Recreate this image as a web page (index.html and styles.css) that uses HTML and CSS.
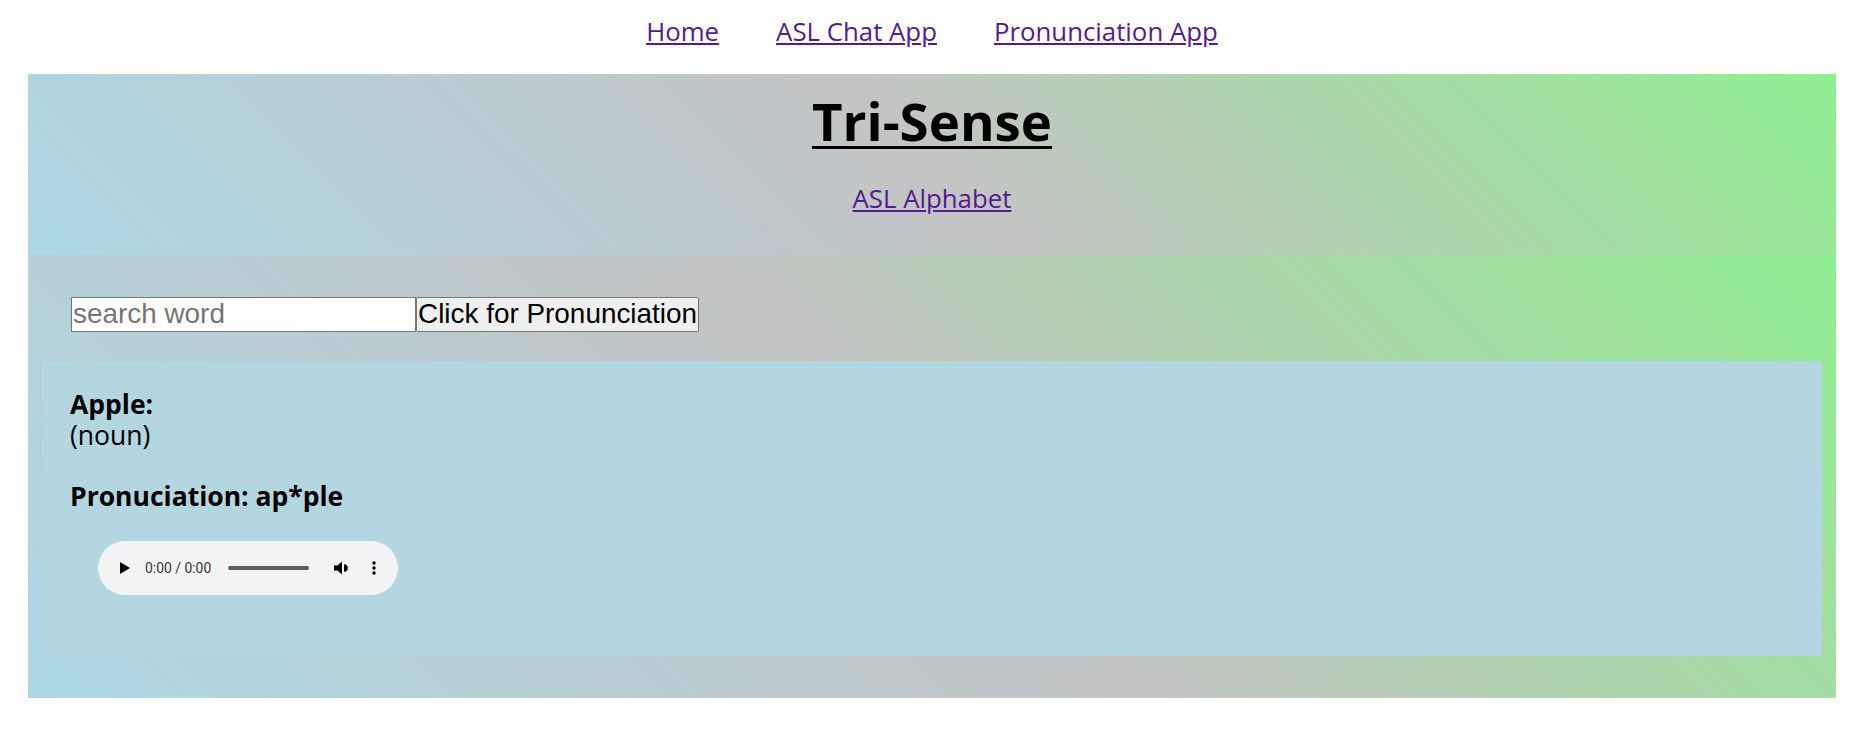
FILE: index.html
```html
<!DOCTYPE html>
<html lang="en">
<head>
<meta charset="utf-8">
<title>Tri-Sense</title>
<link rel="stylesheet" href="styles.css">
</head>
<body>
  <nav class="topnav">
    <a href="#">Home</a>
    <a href="#">ASL Chat App</a>
    <a href="#">Pronunciation App</a>
  </nav>
  <main class="page">
    <header class="hero">
      <h1 class="title">Tri-Sense</h1>
      <a class="sublink" href="#">ASL Alphabet</a>
    </header>
    <section class="lookup">
      <form class="search">
        <input class="search-input" type="text" placeholder="search word">
        <button class="search-btn" type="button">Click for Pronunciation</button>
      </form>
      <div class="result">
        <div class="entry">
          <div class="word">Apple:</div>
          <div class="pos">(noun)</div>
        </div>
        <div class="pron">Pronuciation: ap*ple</div>
        <div class="player" role="group" aria-label="audio player">
          <svg class="ic-play" width="10" height="12" viewBox="0 0 10 12" aria-hidden="true">
            <polygon points="0,0 10,6 0,12" fill="#000"/>
          </svg>
          <span class="time">0:00 / 0:00</span>
          <span class="track"></span>
          <svg class="ic-vol" width="16" height="14" viewBox="0 0 16 14" aria-hidden="true">
            <path d="M0 4.5h3.5L8 0.5v13L3.5 9.5H0z" fill="#000"/>
            <path d="M10 3.2a3.8 3.8 0 0 1 0 7.6z" fill="#000"/>
          </svg>
          <svg class="ic-more" width="4" height="14" viewBox="0 0 4 14" aria-hidden="true">
            <circle cx="2" cy="2" r="1.7" fill="#000"/>
            <circle cx="2" cy="7" r="1.7" fill="#000"/>
            <circle cx="2" cy="12" r="1.7" fill="#000"/>
          </svg>
        </div>
      </div>
    </section>
  </main>
</body>
</html>
```
FILE: styles.css
```css
html, body {
  margin: 0;
  padding: 0;
  background: #ffffff;
}
body {
  font-family: "Open Sans", "Noto Sans", sans-serif;
  color: #000;
}
a {
  color: #551a8b;
}

.topnav {
  display: flex;
  justify-content: center;
  gap: 57px;
  padding: 16px 0 28px;
  font-size: 25.8px;
  line-height: 30px;
}

.page {
  margin: 0 28px;
}

.hero {
  display: flex;
  flex-direction: column;
  align-items: center;
  padding: 21px 0 42px;
  background: linear-gradient(45deg, #add8e6, #c4c4c4, #90ee90);
}
.title {
  margin: 0 0 35px;
  font-size: 52.8px;
  line-height: 52.8px;
  font-weight: 700;
  text-decoration: underline;
  text-decoration-thickness: 3px;
  text-underline-offset: 5px;
}
.sublink {
  font-size: 25.8px;
  line-height: 30px;
}

.lookup {
  padding: 42px 14px;
  background: linear-gradient(45deg, #add8e6, #c4c4c4, #90ee90);
}
.search {
  display: flex;
  margin: 0 0 29px 29px;
}
.search-input {
  box-sizing: border-box;
  width: 345px;
  height: 35px;
  margin: 0;
  padding: 0 1px;
  border: 1px solid #767676;
  border-radius: 0;
  background: #fff;
  font-family: "Liberation Sans", Arial, sans-serif;
  font-size: 27.9px;
  color: #000;
}
.search-input::placeholder {
  color: #757575;
}
.search-btn {
  box-sizing: border-box;
  height: 35px;
  margin: 0;
  padding: 0 1px;
  border: 1px solid #767676;
  border-radius: 2px;
  background: #efefef;
  font-family: "Liberation Sans", Arial, sans-serif;
  font-size: 27.9px;
  color: #000;
}

.result {
  padding: 28px 28px 61px;
  background: #b4d6e0;
  font-size: 26.5px;
  line-height: 31px;
}
.entry {
  margin: 0 0 30px;
}
.word,
.pron {
  font-weight: 700;
}
.pron {
  margin: 0 0 29px;
}

.player {
  box-sizing: border-box;
  display: flex;
  align-items: center;
  width: 300px;
  height: 54px;
  margin-left: 28px;
  padding-left: 22px;
  border-radius: 27px;
  background: #f1f3f4;
}
.ic-play {
  flex: none;
}
.time {
  margin-left: 15px;
  font-family: Roboto, "Open Sans", sans-serif;
  font-size: 13.9px;
  line-height: 16px;
  color: #333;
  white-space: nowrap;
}
.track {
  flex: none;
  width: 81px;
  height: 4px;
  margin-left: 17px;
  border-radius: 2px;
  background: #5e5e5e;
}
.ic-vol {
  flex: none;
  margin-left: 25px;
}
.ic-more {
  flex: none;
  margin-left: 22px;
}
```
